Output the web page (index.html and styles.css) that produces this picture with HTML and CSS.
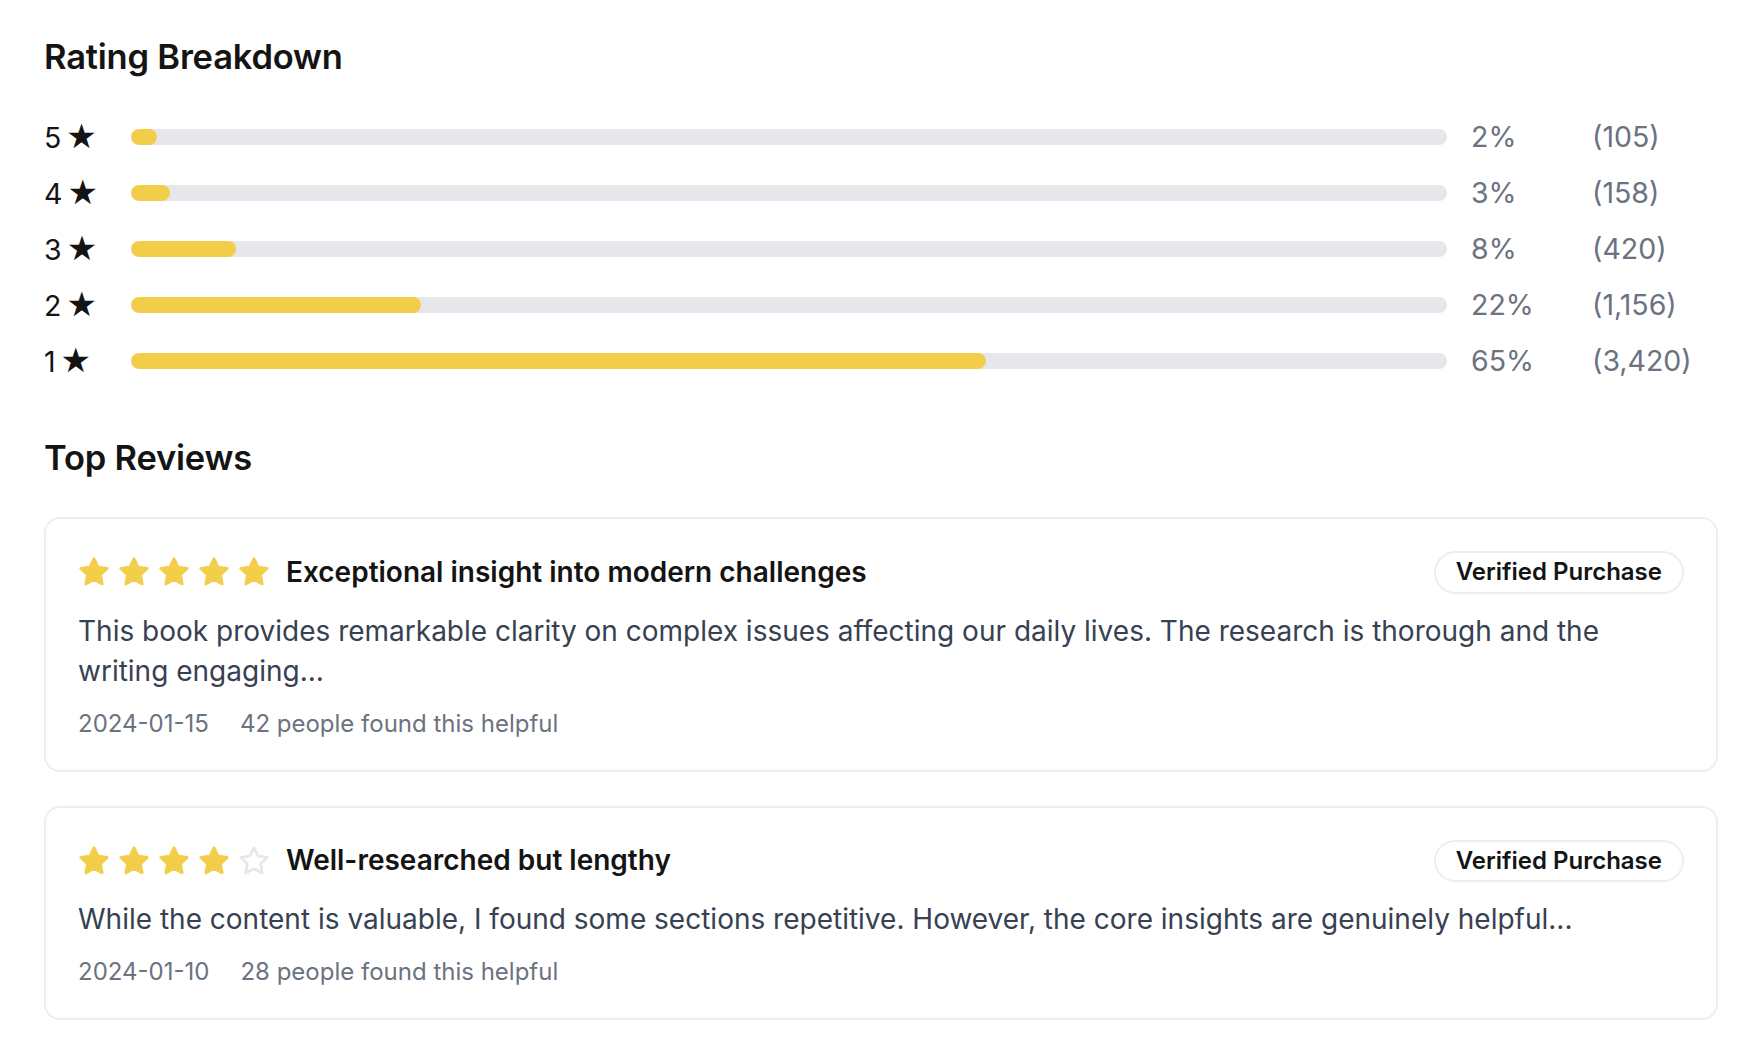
FILE: index.html
```html
<!DOCTYPE html>
<html lang="en">
<head>
<meta charset="utf-8">
<title>Rating Breakdown</title>
<link rel="stylesheet" href="styles.css">
</head>
<body>
<main class="page">
  <section class="breakdown">
    <h2 class="section-title">Rating Breakdown</h2>
    <div class="rows">
      <div class="row">
        <span class="row-label">5 <span class="glyph">★</span></span>
        <div class="track"><div class="fill" style="width:2%"></div></div>
        <span class="row-pct">2%</span>
        <span class="row-count">(105)</span>
      </div>
      <div class="row">
        <span class="row-label">4 <span class="glyph">★</span></span>
        <div class="track"><div class="fill" style="width:3%"></div></div>
        <span class="row-pct">3%</span>
        <span class="row-count">(158)</span>
      </div>
      <div class="row">
        <span class="row-label">3 <span class="glyph">★</span></span>
        <div class="track"><div class="fill" style="width:8%"></div></div>
        <span class="row-pct">8%</span>
        <span class="row-count">(420)</span>
      </div>
      <div class="row">
        <span class="row-label">2 <span class="glyph">★</span></span>
        <div class="track"><div class="fill" style="width:22%"></div></div>
        <span class="row-pct">22%</span>
        <span class="row-count">(1,156)</span>
      </div>
      <div class="row">
        <span class="row-label">1 <span class="glyph">★</span></span>
        <div class="track"><div class="fill" style="width:65%"></div></div>
        <span class="row-pct">65%</span>
        <span class="row-count">(3,420)</span>
      </div>
    </div>
  </section>

  <section class="reviews">
    <h2 class="section-title">Top Reviews</h2>
    <div class="cards">
      <article class="card">
        <div class="card-head">
          <div class="head-left">
            <div class="stars">
              <svg class="star on" viewBox="0 0 24 24"><polygon points="12 2 15.09 8.26 22 9.27 17 14.14 18.18 21.02 12 17.77 5.82 21.02 7 14.14 2 9.27 8.91 8.26 12 2"/></svg>
              <svg class="star on" viewBox="0 0 24 24"><polygon points="12 2 15.09 8.26 22 9.27 17 14.14 18.18 21.02 12 17.77 5.82 21.02 7 14.14 2 9.27 8.91 8.26 12 2"/></svg>
              <svg class="star on" viewBox="0 0 24 24"><polygon points="12 2 15.09 8.26 22 9.27 17 14.14 18.18 21.02 12 17.77 5.82 21.02 7 14.14 2 9.27 8.91 8.26 12 2"/></svg>
              <svg class="star on" viewBox="0 0 24 24"><polygon points="12 2 15.09 8.26 22 9.27 17 14.14 18.18 21.02 12 17.77 5.82 21.02 7 14.14 2 9.27 8.91 8.26 12 2"/></svg>
              <svg class="star on" viewBox="0 0 24 24"><polygon points="12 2 15.09 8.26 22 9.27 17 14.14 18.18 21.02 12 17.77 5.82 21.02 7 14.14 2 9.27 8.91 8.26 12 2"/></svg>
            </div>
            <h3 class="card-title">Exceptional insight into modern challenges</h3>
          </div>
          <span class="badge">Verified Purchase</span>
        </div>
        <p class="card-body">This book provides remarkable clarity on complex issues affecting our daily lives. The research is thorough and the writing engaging...</p>
        <div class="card-meta">
          <span>2024-01-15</span>
          <span>42 people found this helpful</span>
        </div>
      </article>

      <article class="card">
        <div class="card-head">
          <div class="head-left">
            <div class="stars">
              <svg class="star on" viewBox="0 0 24 24"><polygon points="12 2 15.09 8.26 22 9.27 17 14.14 18.18 21.02 12 17.77 5.82 21.02 7 14.14 2 9.27 8.91 8.26 12 2"/></svg>
              <svg class="star on" viewBox="0 0 24 24"><polygon points="12 2 15.09 8.26 22 9.27 17 14.14 18.18 21.02 12 17.77 5.82 21.02 7 14.14 2 9.27 8.91 8.26 12 2"/></svg>
              <svg class="star on" viewBox="0 0 24 24"><polygon points="12 2 15.09 8.26 22 9.27 17 14.14 18.18 21.02 12 17.77 5.82 21.02 7 14.14 2 9.27 8.91 8.26 12 2"/></svg>
              <svg class="star on" viewBox="0 0 24 24"><polygon points="12 2 15.09 8.26 22 9.27 17 14.14 18.18 21.02 12 17.77 5.82 21.02 7 14.14 2 9.27 8.91 8.26 12 2"/></svg>
              <svg class="star off" viewBox="0 0 24 24"><polygon points="12 2 15.09 8.26 22 9.27 17 14.14 18.18 21.02 12 17.77 5.82 21.02 7 14.14 2 9.27 8.91 8.26 12 2"/></svg>
            </div>
            <h3 class="card-title">Well-researched but lengthy</h3>
          </div>
          <span class="badge">Verified Purchase</span>
        </div>
        <p class="card-body">While the content is valuable, I found some sections repetitive. However, the core insights are genuinely helpful...</p>
        <div class="card-meta">
          <span>2024-01-10</span>
          <span>28 people found this helpful</span>
        </div>
      </article>
    </div>
  </section>
</main>
</body>
</html>
```

FILE: styles.css
```css
* { box-sizing: border-box; }

html, body {
  margin: 0;
  background: #ffffff;
}

body {
  font-family: Inter, "Noto Sans", "DejaVu Sans", sans-serif;
  color: #111111;
}

.page {
  width: 1744px;
  padding: 35px 26px 0 44px;
}

.section-title {
  margin: 0 0 37px 0;
  font-size: 34.5px;
  line-height: 44px;
  font-weight: 600;
  color: #141414;
  letter-spacing: -0.2px;
}

.rows {
  display: flex;
  flex-direction: column;
  gap: 16px;
}

.row {
  display: grid;
  grid-template-columns: 63px 1fr 97px 126px;
  column-gap: 24px;
  align-items: center;
  height: 40px;
  font-size: 28.5px;
  line-height: 40px;
}

.row-label {
  color: #141414;
  white-space: nowrap;
}

.glyph {
  font-family: "DejaVu Sans", sans-serif;
  font-size: 34px;
  margin-left: -3px;
}

.track {
  height: 16px;
  border-radius: 8px;
  background: #e5e7eb;
  overflow: hidden;
}

.fill {
  height: 100%;
  border-radius: 8px;
  background: #f3ce4b;
}

.row-pct,
.row-count {
  color: #6b7280;
  white-space: nowrap;
}

.reviews {
  margin-top: 56px;
}

.cards {
  display: flex;
  flex-direction: column;
  gap: 34px;
}

.card {
  border: 2px solid #eceef1;
  border-radius: 16px;
  padding: 32px 32px 31px;
}

.card-head {
  display: flex;
  justify-content: space-between;
  align-items: center;
  margin-bottom: 17px;
}

.head-left {
  display: flex;
  align-items: center;
  gap: 16px;
}

.stars {
  display: flex;
  gap: 8px;
}

.star {
  width: 32px;
  height: 32px;
  stroke-width: 2;
  stroke-linejoin: round;
  stroke-linecap: round;
}

.star.on {
  fill: #f3ce4b;
  stroke: #f3ce4b;
}

.star.off {
  fill: none;
  stroke: #e5e7eb;
}

.card-title {
  margin: 0;
  font-size: 28px;
  line-height: 39px;
  font-weight: 600;
  color: #141414;
}

.badge {
  display: inline-block;
  border: 2px solid #eceef1;
  border-radius: 999px;
  padding: 4px 20px;
  font-size: 24px;
  line-height: 30.6px;
  font-weight: 600;
  color: #141414;
  white-space: nowrap;
}

.card-body {
  margin: 0 0 17px 0;
  font-size: 28px;
  line-height: 40px;
  color: #374151;
}

.card-meta {
  display: flex;
  gap: 31px;
  font-size: 24px;
  line-height: 31px;
  color: #6b7280;
}
```
